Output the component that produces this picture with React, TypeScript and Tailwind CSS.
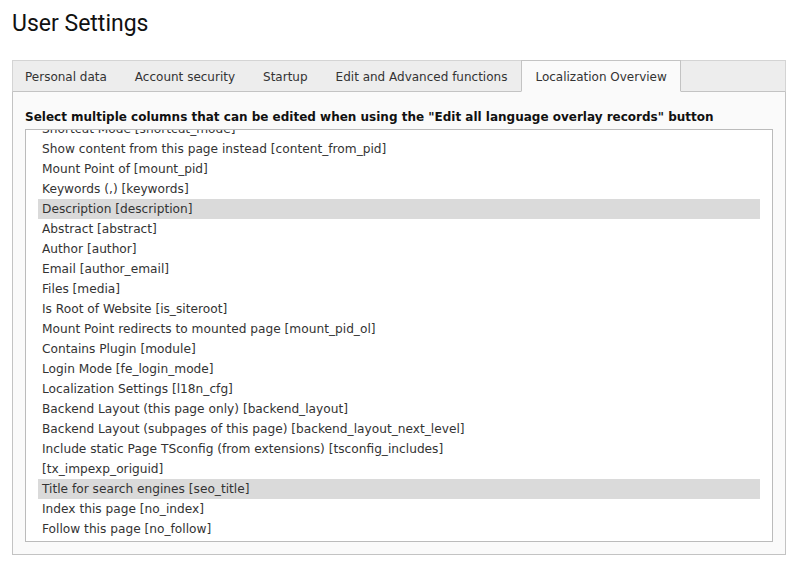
import React from "react";

const rows: { label: string; selected?: boolean }[] = [
  { label: "Shortcut Mode [shortcut_mode]" },
  { label: "Show content from this page instead [content_from_pid]" },
  { label: "Mount Point of [mount_pid]" },
  { label: "Keywords (,) [keywords]" },
  { label: "Description [description]", selected: true },
  { label: "Abstract [abstract]" },
  { label: "Author [author]" },
  { label: "Email [author_email]" },
  { label: "Files [media]" },
  { label: "Is Root of Website [is_siteroot]" },
  { label: "Mount Point redirects to mounted page [mount_pid_ol]" },
  { label: "Contains Plugin [module]" },
  { label: "Login Mode [fe_login_mode]" },
  { label: "Localization Settings [l18n_cfg]" },
  { label: "Backend Layout (this page only) [backend_layout]" },
  { label: "Backend Layout (subpages of this page) [backend_layout_next_level]" },
  { label: "Include static Page TSconfig (from extensions) [tsconfig_includes]" },
  { label: "[tx_impexp_origuid]" },
  { label: "Title for search engines [seo_title]", selected: true },
  { label: "Index this page [no_index]" },
  { label: "Follow this page [no_follow]" },
];

const tabs = [
  "Personal data",
  "Account security",
  "Startup",
  "Edit and Advanced functions",
  "Localization Overview",
];

export default function App() {
  return (
    <div
      className="w-[798px] h-[565px] bg-white px-3 text-[#333]"
      style={{ fontFamily: '"DejaVu Sans", Verdana, sans-serif' }}
    >
      <h1
        className="pt-[9px] h-[60px] text-[23px] leading-[30px] text-[#111]"
        style={{ fontFamily: 'Roboto, "Open Sans", sans-serif' }}
      >
        User Settings
      </h1>
      <div className="flex h-[32px] bg-[#ededed] border border-[#d4d4d4] border-b-[#c3c3c3]">
        {tabs.map((t, i) => {
          const active = i === tabs.length - 1;
          return (
            <div
              key={t}
              className={
                active
                  ? "h-[32px] -mt-px -mb-px pt-[2px] px-[13px] flex items-center text-[12px] bg-[#fafafa] border border-[#c3c3c3] border-b-[#fafafa] text-[#333]"
                  : "h-[30px] pt-[2px] px-[14px] first:pl-[12px] flex items-center text-[12px] text-[#333]"
              }
            >
              {t}
            </div>
          );
        })}
      </div>
      <div className="h-[463px] bg-[#fafafa] border border-t-0 border-[#c3c3c3] px-3 pt-[17px]">
        <div className="h-[16px] mb-[4px] text-[12px] leading-[16px] font-bold text-[#111]">
          Select multiple columns that can be edited when using the "Edit all language overlay records" button
        </div>
        <div className="h-[413px] bg-white border border-[#bbbbbb] overflow-hidden pl-3 pr-3">
          <div className="-mt-[11px]">
            {rows.map((r) => (
              <div
                key={r.label}
                className={
                  "h-[20px] px-[4px] text-[12.2px] leading-[20px] whitespace-nowrap " +
                  (r.selected ? "bg-[#dadada]" : "")
                }
              >
                {r.label}
              </div>
            ))}
          </div>
        </div>
      </div>
    </div>
  );
}
